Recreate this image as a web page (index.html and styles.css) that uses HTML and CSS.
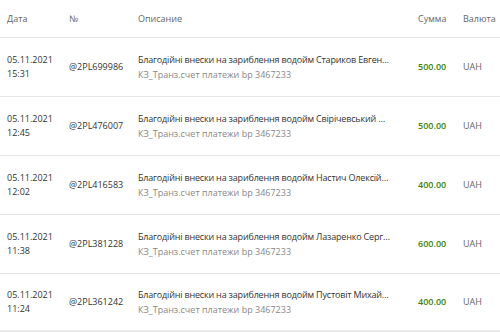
FILE: index.html
```html
<!DOCTYPE html>
<html lang="uk">
<head>
    <meta charset="UTF-8">
    <title>Платежи</title>
    <link rel="stylesheet" href="styles.css">
</head>
<body>
    <div class="card">
        <table class="payments">
            <thead>
                <tr>
                    <th class="col-date">Дата</th>
                    <th class="col-num">№</th>
                    <th class="col-desc">Описание</th>
                    <th class="col-sum">Сумма</th>
                    <th class="col-cur">Валюта</th>
                </tr>
            </thead>
            <tbody>
                <tr>
                    <td>05.11.2021<br>15:31</td>
                    <td>@2PL699986</td>
                    <td>
                        <div class="desc-title">Благодійні внески на зариблення водойм Стариков Евген…</div>
                        <div class="desc-sub">КЗ_Транз.счет платежи bp 3467233</div>
                    </td>
                    <td class="amount">500.00</td>
                    <td class="currency">UAH</td>
                </tr>
                <tr>
                    <td>05.11.2021<br>12:45</td>
                    <td>@2PL476007</td>
                    <td>
                        <div class="desc-title">Благодійні внески на зариблення водойм Свірічевський …</div>
                        <div class="desc-sub">КЗ_Транз.счет платежи bp 3467233</div>
                    </td>
                    <td class="amount">500.00</td>
                    <td class="currency">UAH</td>
                </tr>
                <tr>
                    <td>05.11.2021<br>12:02</td>
                    <td>@2PL416583</td>
                    <td>
                        <div class="desc-title">Благодійні внески на зариблення водойм Настич Олексій…</div>
                        <div class="desc-sub">КЗ_Транз.счет платежи bp 3467233</div>
                    </td>
                    <td class="amount">400.00</td>
                    <td class="currency">UAH</td>
                </tr>
                <tr>
                    <td>05.11.2021<br>11:38</td>
                    <td>@2PL381228</td>
                    <td>
                        <div class="desc-title">Благодійні внески на зариблення водойм Лазаренко Серг…</div>
                        <div class="desc-sub">КЗ_Транз.счет платежи bp 3467233</div>
                    </td>
                    <td class="amount">600.00</td>
                    <td class="currency">UAH</td>
                </tr>
                <tr>
                    <td>05.11.2021<br>11:24</td>
                    <td>@2PL361242</td>
                    <td>
                        <div class="desc-title">Благодійні внески на зариблення водойм Пустовіт Михай…</div>
                        <div class="desc-sub">КЗ_Транз.счет платежи bp 3467233</div>
                    </td>
                    <td class="amount">400.00</td>
                    <td class="currency">UAH</td>
                </tr>
            </tbody>
        </table>
    </div>
</body>
</html>
```

FILE: styles.css
```css
body {
    margin: 0;
    padding: 0;
    background-color: #ececec;
    font-family: "Open Sans", Arial, sans-serif;
    font-size: 9px;
    color: #333333;
}
.card {
    background-color: #ffffff;
    box-shadow: 0 1px 2px rgba(0, 0, 0, 0.12);
}
.payments {
    width: 500px;
    border-collapse: collapse;
    table-layout: fixed;
}
.payments th {
    height: 37px;
    padding: 0 0 0 7px;
    text-align: left;
    font-weight: normal;
    color: #666666;
    border-bottom: 1px solid #e6e6e6;
}
.payments td {
    height: 58px;
    padding: 0 0 0 7px;
    line-height: 14px;
    border-bottom: 1px solid #e6e6e6;
    vertical-align: middle;
}
.payments tbody tr:last-child td {
    height: 56px;
    border-bottom: none;
}
.col-date { width: 55px; }
.col-num { width: 62px; }
.col-desc { width: 273px; }
.col-sum { width: 38px; }
.desc-title {
    white-space: nowrap;
    letter-spacing: -0.18px;
}
.desc-sub {
    margin-top: 1px;
    color: #888888;
}
.amount {
    color: #3a840c;
    font-weight: 600;
}
.currency {
    color: #666666;
}
```
